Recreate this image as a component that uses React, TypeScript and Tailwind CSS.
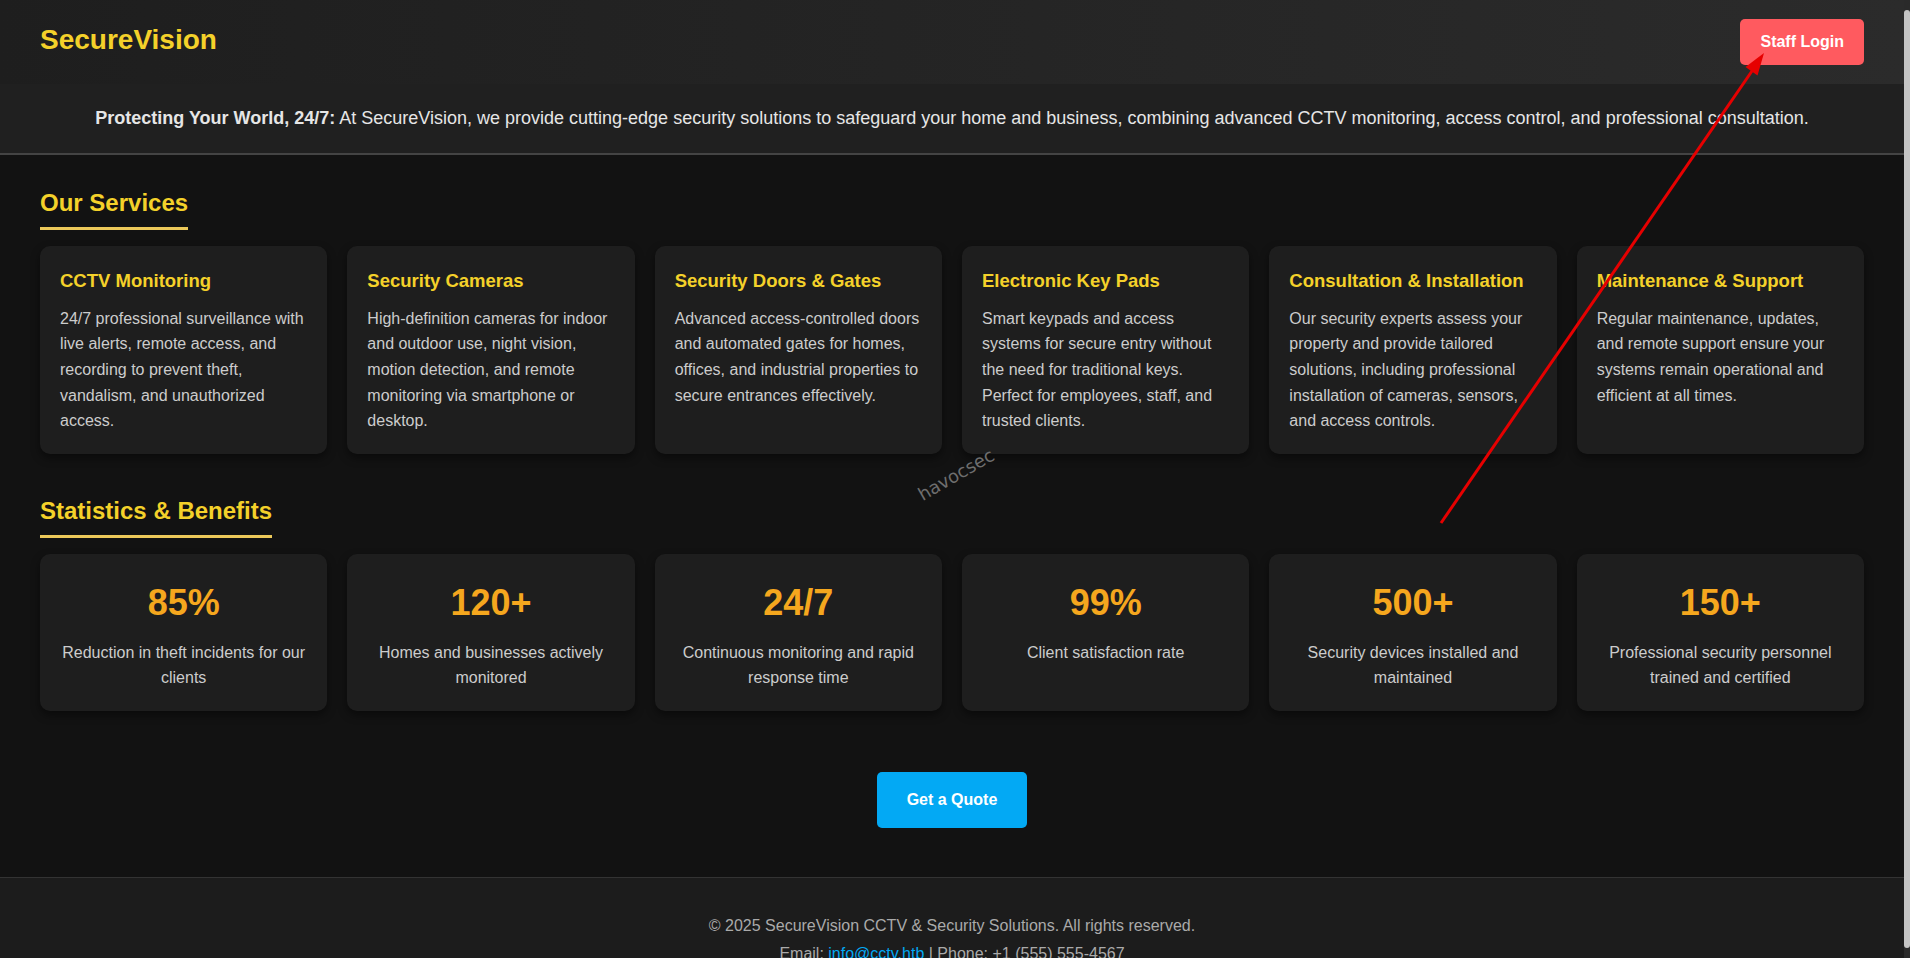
import React from "react";

const services = [
  {
    title: "CCTV Monitoring",
    text: "24/7 professional surveillance with live alerts, remote access, and recording to prevent theft, vandalism, and unauthorized access.",
  },
  {
    title: "Security Cameras",
    text: "High-definition cameras for indoor and outdoor use, night vision, motion detection, and remote monitoring via smartphone or desktop.",
  },
  {
    title: "Security Doors & Gates",
    text: "Advanced access-controlled doors and automated gates for homes, offices, and industrial properties to secure entrances effectively.",
  },
  {
    title: "Electronic Key Pads",
    text: "Smart keypads and access systems for secure entry without the need for traditional keys. Perfect for employees, staff, and trusted clients.",
  },
  {
    title: "Consultation & Installation",
    text: "Our security experts assess your property and provide tailored solutions, including professional installation of cameras, sensors, and access controls.",
  },
  {
    title: "Maintenance & Support",
    text: "Regular maintenance, updates, and remote support ensure your systems remain operational and efficient at all times.",
  },
];

const stats = [
  { value: "85%", label: "Reduction in theft incidents for our clients" },
  { value: "120+", label: "Homes and businesses actively monitored" },
  { value: "24/7", label: "Continuous monitoring and rapid response time" },
  { value: "99%", label: "Client satisfaction rate" },
  { value: "500+", label: "Security devices installed and maintained" },
  { value: "150+", label: "Professional security personnel trained and certified" },
];

const SectionTitle = ({ children }: { children: React.ReactNode }) => (
  <h2 className="w-fit text-[24px] font-bold text-[#f4d12a] leading-[1.6] pb-[5px] border-b-[3px] border-[#ecc95a] mb-4">
    {children}
  </h2>
);

const App = () => {
  return (
    <div className="relative flex min-h-screen bg-[#121212] text-[#e0e0e0] font-['Liberation_Sans',Arial,sans-serif] leading-[1.6]">
      <div className="flex-1 min-w-0">
        <header className="flex items-center justify-between h-[84px] px-10 bg-linear-to-r from-[#1e1e1e] to-[#2b2b2b]">
          <div className="text-[28px] font-bold text-[#f4d12a] -mt-1">SecureVision</div>
          <button className="px-5 py-[10px] rounded-[5px] bg-[#ff5a5f] text-white font-bold text-base leading-[1.6]">
            Staff Login
          </button>
        </header>

        <div className="bg-[#202020] py-5 text-center text-[18px] text-[#e6e6e6] border-b-2 border-[#444]">
          <strong className="font-bold">Protecting Your World, 24/7:</strong> At SecureVision, we provide
          cutting-edge security solutions to safeguard your home and business, combining advanced CCTV
          monitoring, access control, and professional consultation.
        </div>

        <main className="px-10 pt-[29px] pb-[49px]">
          <section>
            <SectionTitle>Our Services</SectionTitle>
            <div className="grid grid-cols-6 gap-5">
              {services.map((s) => (
                <div
                  key={s.title}
                  className="rounded-[10px] bg-[#1e1e1e] p-5 shadow-[0_4px_10px_rgba(0,0,0,0.45)]"
                >
                  <h3 className="text-[18.5px] font-bold text-[#f4d12a] leading-[1.6] mb-[10px]">{s.title}</h3>
                  <p className="text-base text-[#cccccc] leading-[1.6]">{s.text}</p>
                </div>
              ))}
            </div>
          </section>

          <section className="mt-[38px]">
            <SectionTitle>Statistics &amp; Benefits</SectionTitle>
            <div className="grid grid-cols-6 gap-5">
              {stats.map((s) => (
                <div
                  key={s.value}
                  className="rounded-[10px] bg-[#1e1e1e] p-5 text-center shadow-[0_4px_10px_rgba(0,0,0,0.45)]"
                >
                  <div className="text-[36px] font-bold text-[#f5a71e] leading-[1.6] mb-2">{s.value}</div>
                  <p className="text-base text-[#cccccc] leading-[1.6]">{s.label}</p>
                </div>
              ))}
            </div>
          </section>

          <div className="flex justify-center mt-[61px]">
            <button className="px-[30px] py-[15px] rounded-[5px] bg-[#03a9f4] text-white font-bold text-base leading-[1.6]">
              Get a Quote
            </button>
          </div>
        </main>

        <footer className="border-t border-[#333] bg-[#1c1c1c] pt-[34px] pb-[34px] text-center text-base text-[#aaaaaa]">
          <p className="leading-[28px]">© 2025 SecureVision CCTV &amp; Security Solutions. All rights reserved.</p>
          <p className="leading-[28px]">
            Email: <a className="text-[#03a9f4]" href="#">info@cctv.htb</a> | Phone: +1 (555) 555-4567
          </p>
        </footer>
      </div>

      {/* thin page scrollbar */}
      <div className="w-[6px] shrink-0 bg-[#2a2a2a]">
        <div className="sticky top-0 h-[958px] py-[10px]">
          <div className="h-full rounded-full bg-[#c4c4c4]" />
        </div>
      </div>

      {/* watermark */}
      <span className="pointer-events-none absolute left-[914px] top-[466px] -rotate-30 text-[18px] text-[#6e6e6e] font-['DejaVu_Sans',sans-serif] leading-none">
        havocsec
      </span>

      {/* pointer arrow */}
      <svg
        className="pointer-events-none absolute left-0 top-0"
        width="1910"
        height="958"
        viewBox="0 0 1910 958"
      >
        <line x1="1441" y1="523" x2="1752" y2="71" stroke="#e60000" strokeWidth="3" />
        <polygon points="1764,53 1757.5,75.5 1745.5,67" fill="#e60000" />
      </svg>
    </div>
  );
};

export default App;
